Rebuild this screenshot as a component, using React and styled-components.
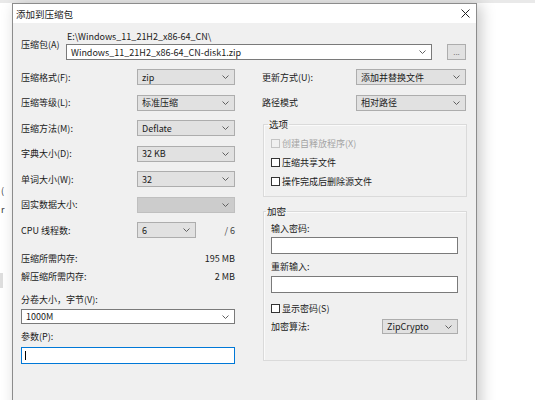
import styled, { createGlobalStyle } from "styled-components";

const GlobalStyle = createGlobalStyle`
  html, body {
    margin: 0;
    padding: 0;
    background: #fff;
  }
  body {
    font-family: "Noto Sans CJK SC", "Noto Sans", sans-serif;
    font-size: 9px;
    color: #1a1a1a;
  }
  * {
    box-sizing: border-box;
  }
`;

const Screen = styled.div`
  width: 535px;
  height: 400px;
  overflow: hidden;
  background: #fff;
  display: flex;
  flex-direction: column;
`;
const BackdropTop = styled.div`
  height: 3px;
  flex-shrink: 0;
  background: #e9e9e9;
`;
const Stage = styled.div`
  display: flex;
  flex: 1;
  min-height: 0;
`;
const BackdropEdge = styled.div`
  width: 12px;
  flex-shrink: 0;
  display: flex;
  flex-direction: column;
  padding-top: 183px;
  color: #333;
  font-size: 9px;
  line-height: 10px;
  overflow: hidden;
`;
const EdgeGlyph = styled.div`
  margin-top: ${(p) => p.$mt || 0}px;
  height: 10px;
  padding-left: 1px;
`;
const EdgeBar = styled.div`
  margin-top: 58px;
  width: 3px;
  height: 15px;
  background: #dedede;
`;

const Dialog = styled.div`
  width: 465px;
  height: 420px;
  flex-shrink: 0;
  border: 1px solid #8c8c8c;
  background: #f0f0f0;
  box-shadow: 4px 2px 14px rgba(0, 0, 0, 0.22);
  display: flex;
  flex-direction: column;
`;
const TitleBar = styled.div`
  height: 19px;
  background: #fff;
  display: flex;
  align-items: center;
  justify-content: space-between;
  padding: 0 6px 0 3px;
  font-size: 9.5px;
`;
const Body = styled.div`
  padding: 8px 9px 0 8px;
  display: flex;
  flex-direction: column;
`;

const ArchiveRow = styled.div`
  display: grid;
  grid-template-columns: 45px 1fr 34px;
  grid-template-rows: 13px 16px;
  margin-right: 1px;
`;
const ArchiveLabel = styled.div`
  grid-row: 1 / span 2;
  align-self: center;
  padding-bottom: 3px;
`;
const PathText = styled.div`
  grid-column: 2 / span 2;
  line-height: 12px;
  padding-left: 1px;
`;
const BrowseButton = styled.div`
  justify-self: end;
  width: 19px;
  background: #e1e1e1;
  border: 1px solid #adadad;
  display: flex;
  align-items: center;
  justify-content: center;
  color: #777;
  font-size: 8px;
  line-height: 8px;
`;

const Columns = styled.div`
  margin-top: 9px;
  display: grid;
  grid-template-columns: 214px 205px;
  column-gap: 27px;
`;
const Column = styled.div`
  display: flex;
  flex-direction: column;
`;
const SettingsList = styled.div`
  display: flex;
  flex-direction: column;
  gap: 9.5px;
`;
const SettingRow = styled.div`
  display: grid;
  grid-template-columns: ${(p) => p.$cols};
  align-items: center;
  height: 16px;
`;
const Muted = styled.span`
  justify-self: end;
  color: #444;
`;

const Field = styled.div`
  height: ${(p) => p.$h || 16}px;
  margin-top: ${(p) => p.$mt || 0}px;
  width: ${(p) => (p.$w ? `${p.$w}px` : "auto")};
  display: flex;
  align-items: center;
  justify-content: space-between;
  padding: 0 5px 0 4px;
  background: ${(p) =>
    p.$variant === "edit" ? "#fff" : p.$variant === "off" ? "#cccccc" : "#e1e1e1"};
  border: 1px solid
    ${(p) =>
      p.$variant === "edit" ? "#7a7a7a" : p.$variant === "off" ? "#bfbfbf" : "#adadad"};
  white-space: nowrap;
`;
const TextInput = styled.div`
  height: ${(p) => p.$h || 17}px;
  margin-top: ${(p) => p.$mt || 0}px;
  background: #fff;
  border: 1px solid ${(p) => (p.$focus ? "#0078d7" : "#7a7a7a")};
  display: flex;
  align-items: center;
  padding-left: 3px;
`;
const Caret = styled.span`
  width: 1px;
  height: 9px;
  background: #000;
`;

const StatRow = styled.div`
  display: flex;
  justify-content: space-between;
  align-items: center;
  height: 18px;
  margin-top: ${(p) => p.$mt || 0}px;
`;
const FieldLabel = styled.div`
  height: 12px;
  line-height: 12px;
  margin-top: ${(p) => p.$mt || 0}px;
`;

const Group = styled.fieldset`
  margin: ${(p) => p.$mt}px 0 0 1px;
  padding: ${(p) => p.$pad};
  border: 1px solid #dadada;
  box-shadow: inset 1px 1px 0 #fafafa;
  min-width: 0;
  display: flex;
  flex-direction: column;
`;
const Legend = styled.legend`
  margin-left: ${(p) => p.$ml}px;
  padding: 0 1px;
  font-size: 9.5px;
  line-height: 12px;
  height: 12px;
`;
const CheckRow = styled.div`
  display: flex;
  align-items: center;
  gap: 2px;
  height: ${(p) => p.$h || 19}px;
  margin-top: ${(p) => p.$mt || 0}px;
  color: ${(p) => (p.$disabled ? "#a3a3a3" : "inherit")};
`;
const Box = styled.span`
  width: 9px;
  height: 9px;
  flex-shrink: 0;
  border: 1px solid ${(p) => (p.$disabled ? "#c4c4c4" : "#333")};
  background: ${(p) => (p.$disabled ? "#f0f0f0" : "#fff")};
`;
const AlgoRow = styled.div`
  display: flex;
  justify-content: space-between;
  align-items: center;
  margin-top: 4px;
`;

function Chevron() {
  return (
    <svg width="7" height="4" viewBox="0 0 7 4">
      <polyline points="0.5,0.5 3.5,3.5 6.5,0.5" fill="none" stroke="#606060" strokeWidth="1" />
    </svg>
  );
}

function CloseIcon() {
  return (
    <svg width="9" height="9" viewBox="0 0 9 9">
      <path d="M0.5 0.5 L8.5 8.5 M8.5 0.5 L0.5 8.5" stroke="#222" strokeWidth="1" />
    </svg>
  );
}

function Select({ value, variant, w, h, mt }) {
  return (
    <Field $variant={variant} $w={w} $h={h} $mt={mt}>
      <span>{value}</span>
      <Chevron />
    </Field>
  );
}

function Check({ label, disabled, h, mt }) {
  return (
    <CheckRow $disabled={disabled} $h={h} $mt={mt}>
      <Box $disabled={disabled} />
      <span>{label}</span>
    </CheckRow>
  );
}

const leftSettings = [
  ["压缩格式(F):", "zip"],
  ["压缩等级(L):", "标准压缩"],
  ["压缩方法(M):", "Deflate"],
  ["字典大小(D):", "32 KB"],
  ["单词大小(W):", "32"],
  ["固实数据大小:", "", "off"],
];

export default function App() {
  return (
    <>
      <GlobalStyle />
      <Screen>
        <BackdropTop />
        <Stage>
          <BackdropEdge>
            <EdgeGlyph>(</EdgeGlyph>
            <EdgeGlyph $mt={9}>r</EdgeGlyph>
            <EdgeBar />
          </BackdropEdge>
          <Dialog>
            <TitleBar>
              <span>添加到压缩包</span>
              <CloseIcon />
            </TitleBar>
            <Body>
              <ArchiveRow>
                <ArchiveLabel>压缩包(A)</ArchiveLabel>
                <PathText>E:\Windows_11_21H2_x86-64_CN\</PathText>
                <Select value="Windows_11_21H2_x86-64_CN-disk1.zip" variant="edit" />
                <BrowseButton>...</BrowseButton>
              </ArchiveRow>

              <Columns>
                <Column>
                  <SettingsList>
                    {leftSettings.map(([label, value, variant]) => (
                      <SettingRow key={label} $cols="116px 98px">
                        <span>{label}</span>
                        <Select value={value} variant={variant} />
                      </SettingRow>
                    ))}
                    <SettingRow $cols="116px 59px 1fr">
                      <span>CPU 线程数:</span>
                      <Select value="6" />
                      <Muted>/ 6</Muted>
                    </SettingRow>
                  </SettingsList>
                  <StatRow $mt={11}>
                    <span>压缩所需内存:</span>
                    <span>195 MB</span>
                  </StatRow>
                  <StatRow>
                    <span>解压缩所需内存:</span>
                    <span>2 MB</span>
                  </StatRow>
                  <FieldLabel $mt={9}>分卷大小，字节(V):</FieldLabel>
                  <Select value="1000M" variant="edit" h={15} mt={3} />
                  <FieldLabel $mt={7}>参数(P):</FieldLabel>
                  <TextInput $focus $mt={4}>
                    <Caret />
                  </TextInput>
                </Column>

                <Column>
                  <SettingsList>
                    <SettingRow $cols="94px 110px">
                      <span>更新方式(U):</span>
                      <Select value="添加并替换文件" />
                    </SettingRow>
                    <SettingRow $cols="94px 110px">
                      <span>路径模式</span>
                      <Select value="相对路径" />
                    </SettingRow>
                  </SettingsList>

                  <Group $mt={7.5} $pad="0 8px 5.5px 7px">
                    <Legend $ml={-3}>选项</Legend>
                    <Check label="创建自释放程序(X)" disabled mt={3.5} />
                    <Check label="压缩共享文件" />
                    <Check label="操作完成后删除源文件" />
                  </Group>

                  <Group $mt={8} $pad="0 8px 26px 7px">
                    <Legend $ml={-5}>加密</Legend>
                    <FieldLabel $mt={6}>输入密码:</FieldLabel>
                    <TextInput $mt={2} />
                    <FieldLabel $mt={7}>重新输入:</FieldLabel>
                    <TextInput $mt={3} />
                    <Check label="显示密码(S)" h={14} mt={8} />
                    <AlgoRow>
                      <span>加密算法:</span>
                      <Select value="ZipCrypto" w={76} h={15} />
                    </AlgoRow>
                  </Group>
                </Column>
              </Columns>
            </Body>
          </Dialog>
        </Stage>
      </Screen>
    </>
  );
}
